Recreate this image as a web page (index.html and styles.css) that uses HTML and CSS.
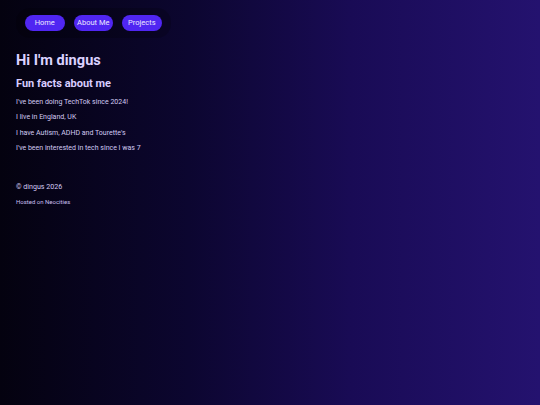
FILE: index.html
```html
<!DOCTYPE html>
<html lang="en">
<head>
<meta charset="utf-8">
<title>dingus</title>
<link rel="stylesheet" href="styles.css">
</head>
<body>
  <div class="page">
    <nav class="nav">
      <a class="nav-btn" href="#">Home</a>
      <a class="nav-btn" href="#">About Me</a>
      <a class="nav-btn" href="#">Projects</a>
    </nav>
    <main class="content">
      <h1 class="title">Hi I'm dingus</h1>
      <h2 class="subtitle">Fun facts about me</h2>
      <p class="fact">I've been doing TechTok since 2024!</p>
      <p class="fact">I live in England, UK</p>
      <p class="fact">I have Autism, ADHD and Tourette's</p>
      <p class="fact">I've been interested in tech since I was 7</p>
    </main>
    <footer class="footer">
      <p class="copy">© dingus 2026</p>
      <p class="host">Hosted on Neocities</p>
    </footer>
  </div>
</body>
</html>
```
FILE: styles.css
```css
html, body {
  margin: 0;
  height: 100%;
}

body {
  background: linear-gradient(to right, #04020f 0%, #0c0630 35%, #190b55 65%, #24126f 100%);
  font-family: Roboto, "Noto Sans", sans-serif;
  color: #d4cbf5;
}

.page {
  padding: 8px 16px;
}

.nav {
  display: inline-flex;
  gap: 9px;
  padding: 7px 9px;
  border-radius: 14px;
  background: rgba(0, 0, 0, 0.18);
}

.nav-btn {
  display: block;
  width: 39.5px;
  height: 16px;
  line-height: 16px;
  border-radius: 8px;
  background: #5026f2;
  color: #ece8ff;
  font-size: 7.5px;
  text-align: center;
  text-decoration: none;
}

.content {
  margin-top: 12px;
}

.title {
  margin: 0;
  font-size: 14.6px;
  font-weight: 700;
  line-height: 20px;
  color: #dcd2ff;
}

.subtitle {
  margin: 7px 0 4px;
  font-size: 11px;
  font-weight: 700;
  line-height: 14px;
  color: #d8cdff;
}

.fact {
  margin: 0;
  font-size: 7px;
  line-height: 15.3px;
  color: #d2caf2;
}

.footer {
  margin-top: 25px;
}

.copy {
  margin: 0;
  font-size: 7.1px;
  line-height: 12px;
  color: #d4cbf5;
}

.host {
  margin: 4px 0 0;
  font-size: 6px;
  line-height: 10px;
  color: #c8bfee;
}
```
